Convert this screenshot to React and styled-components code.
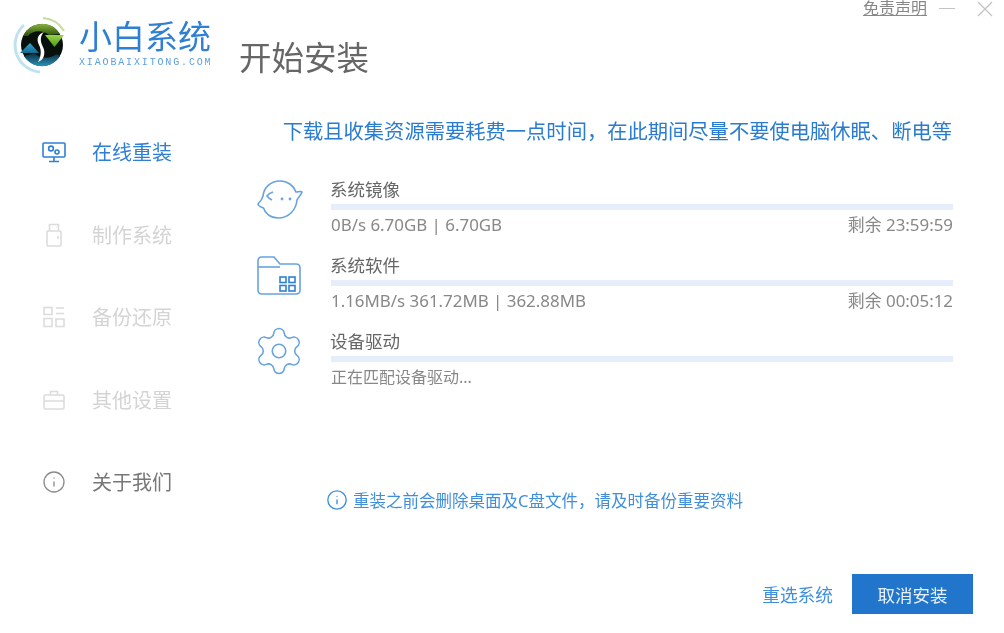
import React from "react";
import styled, { createGlobalStyle } from "styled-components";
import { Settings, Info } from "lucide-react";

const GlobalStyle = createGlobalStyle`
  html, body {
    margin: 0;
    padding: 0;
    background: #fff;
  }
  body {
    font-family: "Noto Sans", "Noto Sans CJK SC", sans-serif;
  }
`;

const Gear = styled(Settings)`
  flex-shrink: 0;
  margin: -2px 0 0 -5px;
`;

const LogoMark = () => (
  <svg width="58" height="58" viewBox="0 0 58 58">
    <defs>
      <linearGradient id="capGreen" x1="0" y1="0" x2="0" y2="1">
        <stop offset="0" stopColor="#86b53a" />
        <stop offset="1" stopColor="#2c4f0c" />
      </linearGradient>
      <linearGradient id="capBlue" x1="0" y1="0" x2="0" y2="1">
        <stop offset="0" stopColor="#0a2a3a" />
        <stop offset="1" stopColor="#2a94bd" />
      </linearGradient>
      <linearGradient id="headGreen" x1="0" y1="0" x2="0" y2="1">
        <stop offset="0" stopColor="#9ad24a" />
        <stop offset="1" stopColor="#4c9e16" />
      </linearGradient>
      <linearGradient id="headBlue" x1="0" y1="0" x2="0" y2="1">
        <stop offset="0" stopColor="#36a8d2" />
        <stop offset="1" stopColor="#12688f" />
      </linearGradient>
    </defs>
    <path d="M30 2 A27 27 0 0 1 51 15" fill="none" stroke="#c5dc9c" strokeWidth="2" />
    <path d="M11 9 A27 27 0 0 0 27 56" fill="none" stroke="#bfe2ee" strokeWidth="3" />
    <circle cx="29" cy="29" r="21" fill="#07100b" />
    <path d="M10 20 A21 21 0 0 1 47 18 L36 19 C30 14 20 14 15 20 Z" fill="url(#capGreen)" />
    <path d="M11 40 L21 37 C27 43 37 43 44 38 L47 40 A21 21 0 0 1 11 40 Z" fill="url(#capBlue)" />
    <path d="M32 19 L51 19 L41.500 31 Z" fill="url(#headGreen)" />
    <path d="M17 27 L26 37 L7 37 Z" fill="url(#headBlue)" />
    <path d="M31 16 C25 18 23 23 26 29 C28 33 29 39 25 46 C31 44 33 37 30 31 C27 25 27 20 31 16 Z" fill="#fff" />
  </svg>
);

const MonitorIcon = () => (
  <svg width="24" height="21" viewBox="0 0 24 21" fill="none" stroke="#2f80d4" strokeWidth="1.6">
    <rect x="1" y="1" width="22" height="14" rx="1" />
    <circle cx="9" cy="6.500" r="2.400" />
    <circle cx="15" cy="10" r="2" />
    <path d="M12 15v4M7 19.500h10" />
  </svg>
);

const UsbIcon = () => (
  <svg width="16" height="24" viewBox="0 0 16 24" fill="none" stroke="#dcdcdc" strokeWidth="1.6">
    <rect x="1" y="8" width="14" height="15" rx="1" />
    <path d="M3.500 8V1.500h9V8M6.500 4h.5M10 4h.5M12 13v3" />
  </svg>
);

const BackupIcon = () => (
  <svg width="22" height="22" viewBox="0 0 22 22" fill="none" stroke="#dcdcdc" strokeWidth="1.6">
    <rect x="1" y="1.500" width="8" height="7" />
    <rect x="1" y="12.500" width="8" height="8" />
    <path d="M13 2h8M13 7.500h8M13 13h8v7.500h-8z" />
  </svg>
);

const CaseIcon = () => (
  <svg width="22" height="20" viewBox="0 0 22 20" fill="none" stroke="#dcdcdc" strokeWidth="1.6">
    <rect x="1" y="5" width="20" height="14" rx="1.500" />
    <path d="M7.500 5V1.500h7V5M1 11h20" />
  </svg>
);

const BubbleIcon = () => (
  <svg width="46" height="39" viewBox="0 0 46 39" fill="none" stroke="#67a3df" strokeWidth="1.6">
    <path d="M6 16 C7 7 14 1 23 1 C31 1 37 6 39 12 C41 12 44 11 45 12 C44 15 41 18 40 20 C39 30 32 38 21 38 C13 38 8 33 6.500 28 C4 27 1 26 1 24 C3 22 5 20 6 16 Z" />
    <path d="M16 12 C13 13 11 14.500 10 16 C11 17.500 13 19 15 20" />
    <circle cx="25" cy="19" r="0.600" />
    <circle cx="33" cy="19" r="0.600" />
  </svg>
);

const FolderIcon = () => (
  <svg width="44" height="39" viewBox="0 0 44 39" fill="none" stroke="#67a3df" strokeWidth="1.6">
    <path d="M1 5 Q1 1 5 1 H17 L23 8 H39 Q43 8 43 12 V34 Q43 38 39 38 H5 Q1 38 1 34 Z" />
    <path d="M1 11 H23" />
    <g stroke="#2f80d4">
      <rect x="23" y="21" width="6" height="5.500" />
      <rect x="32" y="21" width="6" height="5.500" />
      <rect x="23" y="29.500" width="6" height="5.500" />
      <rect x="32" y="29.500" width="6" height="5.500" />
    </g>
  </svg>
);

const navItems = [
  { label: "在线重装", icon: <MonitorIcon />, tone: "active" },
  { label: "制作系统", icon: <UsbIcon />, tone: "muted" },
  { label: "备份还原", icon: <BackupIcon />, tone: "muted" },
  { label: "其他设置", icon: <CaseIcon />, tone: "muted" },
  { label: "关于我们", icon: <Info size={28} strokeWidth={1.3} color="#8a8a8a" />, tone: "plain" },
];

const downloads = [
  { name: "系统镜像", speed: "0B/s 6.70GB | 6.70GB", remain: "剩余 23:59:59", icon: <BubbleIcon /> },
  { name: "系统软件", speed: "1.16MB/s 361.72MB | 362.88MB", remain: "剩余 00:05:12", icon: <FolderIcon /> },
  { name: "设备驱动", speed: "正在匹配设备驱动...", status: true, icon: <Gear size={54} strokeWidth={0.7} color="#67a3df" /> },
];

const App = () => {
  return (
    <Page>
      <GlobalStyle />
      <Header>
        <Logo>
          <LogoMark />
          <Brand>
            <BrandName>小白系统</BrandName>
            <BrandSite>XIAOBAIXITONG.COM</BrandSite>
          </Brand>
        </Logo>
        <Title>开始安装</Title>
        <WindowBar>
          <Disclaimer>免责声明</Disclaimer>
          <Minimize />
          <svg width="16" height="16" viewBox="0 0 16 16" stroke="#c4c4c4" strokeWidth="1.3">
            <path d="M1 1l14 14M15 1L1 15" />
          </svg>
        </WindowBar>
      </Header>
      <Body>
        <Sidebar>
          {navItems.map((item) => (
            <NavItem key={item.label} $tone={item.tone}>
              <NavIcon>{item.icon}</NavIcon>
              <NavLabel>{item.label}</NavLabel>
            </NavItem>
          ))}
        </Sidebar>
        <Main>
          <Notice>下载且收集资源需要耗费一点时间，在此期间尽量不要使电脑休眠、断电等</Notice>
          <Rows>
            {downloads.map((row) => (
              <Row key={row.name}>
                <RowIcon>{row.icon}</RowIcon>
                <div>
                  <RowName>{row.name}</RowName>
                  <Track />
                  <RowMeta $status={row.status}>
                    <span>{row.speed}</span>
                    <span>{row.remain}</span>
                  </RowMeta>
                </div>
              </Row>
            ))}
          </Rows>
          <Warning>
            <Info size={22} strokeWidth={1.5} color="#3f8fdc" />
            重装之前会删除桌面及C盘文件，请及时备份重要资料
          </Warning>
          <Footer>
            <TextLink>重选系统</TextLink>
            <PrimaryButton>取消安装</PrimaryButton>
          </Footer>
        </Main>
      </Body>
    </Page>
  );
};

const Page = styled.div`
  width: 1004px;
  height: 633px;
  overflow: hidden;
  background: #fff;
  filter: blur(0.45px);
`;

const Header = styled.header`
  display: flex;
  height: 111px;
  padding-left: 13px;
  box-sizing: border-box;
`;

const Logo = styled.div`
  display: flex;
  width: 226px;
  height: 58px;
  margin-top: 16px;
  gap: 8px;
`;

const Brand = styled.div`
  display: flex;
  flex-direction: column;
  color: #2f80d4;
`;

const BrandName = styled.div`
  margin-top: 1px;
  font-size: 33px;
  line-height: 40px;
  font-weight: 400;
  white-space: nowrap;
`;

const BrandSite = styled.div`
  font-family: "Liberation Mono", monospace;
  font-size: 10px;
  line-height: 12px;
  letter-spacing: 1.85px;
  color: #5a9fe2;
  white-space: nowrap;
`;

const Title = styled.h1`
  margin: 38px 0 0;
  font-size: 32.5px;
  line-height: 40px;
  font-weight: 400;
  color: #666;
`;

const WindowBar = styled.div`
  display: flex;
  align-items: center;
  gap: 12px;
  height: 18px;
  margin-left: auto;
  padding-right: 11px;
`;

const Disclaimer = styled.span`
  font-family: "Liberation Sans", "Noto Sans CJK SC", sans-serif;
  font-size: 16px;
  line-height: 18px;
  color: #888;
  text-decoration: underline;
`;

const Minimize = styled.span`
  width: 16px;
  height: 1px;
  margin: 0 10px 2px 0;
  background: #c4c4c4;
`;

const Body = styled.div`
  display: flex;
`;

const Sidebar = styled.nav`
  width: 238px;
  flex-shrink: 0;
`;

const toneColors = {
  active: "#2f80d4",
  muted: "#d4d4d4",
  plain: "#777",
};

const NavItem = styled.div`
  display: flex;
  align-items: center;
  height: 82.5px;
  padding-left: 42px;
  font-size: 20px;
  color: ${({ $tone }) => toneColors[$tone]};
`;

const NavIcon = styled.span`
  display: flex;
  justify-content: center;
  width: 24px;
  margin-right: 26px;
`;

const NavLabel = styled.span`
  line-height: 26px;
  margin-top: 2px;
`;

const Main = styled.main`
  flex: 1;
  padding: 0 31px 0 19px;
`;

const Notice = styled.div`
  height: 40px;
  margin-right: 21px;
  font-size: 20.3px;
  line-height: 40px;
  text-align: right;
  white-space: nowrap;
  color: #2a7cd0;
`;

const Rows = styled.div`
  display: flex;
  flex-direction: column;
  gap: 14px;
  margin: 27px 20px 0 0;
`;

const Row = styled.div`
  display: grid;
  grid-template-columns: 74px 1fr;
  height: 62px;
`;

const RowIcon = styled.div`
  display: flex;
  align-items: center;
  height: 41px;
  margin-top: 1px;
`;

const RowName = styled.div`
  margin-left: -1px;
  font-size: 17.5px;
  line-height: 22px;
  color: #666;
`;

const Track = styled.div`
  height: 6px;
  margin-top: 4px;
  background: #e5eefa;
`;

const RowMeta = styled.div`
  display: flex;
  justify-content: space-between;
  font-size: ${({ $status }) => ($status ? "16px" : "16.9px")};
  line-height: 30px;
  color: #888;
`;

const Warning = styled.div`
  display: flex;
  align-items: center;
  gap: 5px;
  height: 24px;
  margin: 96px 0 0 69px;
  font-size: 16.5px;
  color: #3f8fdc;
`;

const Footer = styled.div`
  display: flex;
  align-items: center;
  justify-content: flex-end;
  gap: 19px;
  margin-top: 62px;
`;

const TextLink = styled.span`
  font-size: 17.7px;
  color: #3f8fdc;
`;

const PrimaryButton = styled.button`
  width: 121px;
  height: 40px;
  border: 0;
  padding: 0;
  background: #2176cc;
  color: #e8f1fa;
  font-family: inherit;
  font-size: 17.5px;
`;

export default App;
